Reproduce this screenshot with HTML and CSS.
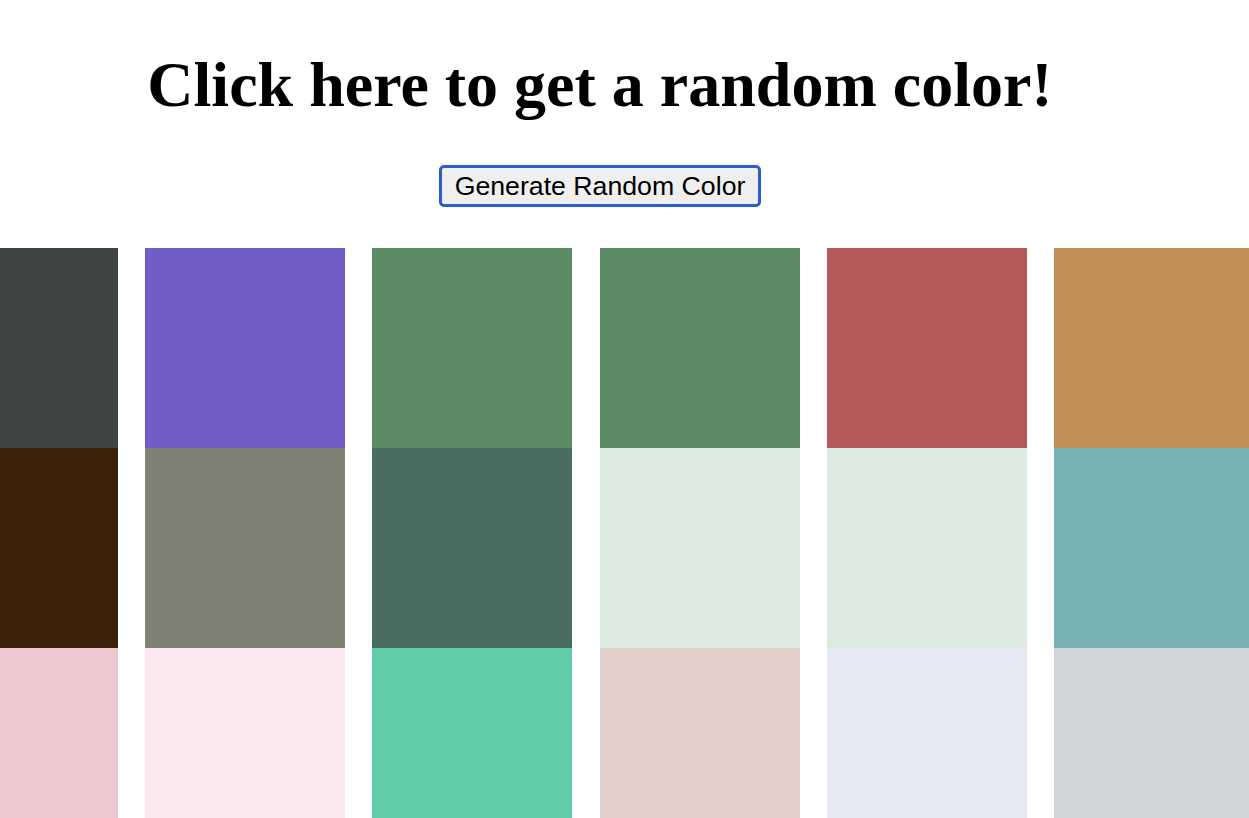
FILE: index.html
```html
<!DOCTYPE html>
<html lang="en">
<head>
<meta charset="utf-8">
<title>Random Color</title>
<link rel="stylesheet" href="styles.css">
</head>
<body>
<main class="page">
  <h1 class="title">Click here to get a random color!</h1>
  <div class="actions">
    <button class="generate" type="button">Generate Random Color</button>
  </div>
  <section class="swatches">
    <div class="swatch c1"></div>
    <div class="swatch c2"></div>
    <div class="swatch c3"></div>
    <div class="swatch c4"></div>
    <div class="swatch c5"></div>
    <div class="swatch c6"></div>
    <div class="swatch c7"></div>
    <div class="swatch c8"></div>
    <div class="swatch c9"></div>
    <div class="swatch c10"></div>
    <div class="swatch c11"></div>
    <div class="swatch c12"></div>
    <div class="swatch c13"></div>
    <div class="swatch c14"></div>
    <div class="swatch c15"></div>
    <div class="swatch c16"></div>
    <div class="swatch c17"></div>
    <div class="swatch c18"></div>
  </section>
</main>
</body>
</html>
```

FILE: styles.css
```css
html, body {
  margin: 0;
  padding: 0;
  background: #ffffff;
  overflow: hidden;
}

.page {
  width: 1200px;
}

.title {
  margin: 0;
  padding-top: 48px;
  font-family: "Liberation Serif", "Times New Roman", serif;
  font-weight: bold;
  font-size: 64px;
  line-height: 74px;
  text-align: center;
  color: #000000;
}

.actions {
  display: flex;
  justify-content: center;
  margin-top: 43px;
}

.generate {
  font-family: "Liberation Sans", Arial, sans-serif;
  font-size: 26.7px;
  line-height: 30px;
  color: #000000;
  background: #efefef;
  border: 3px solid #2a5ecb;
  border-radius: 5px;
  padding: 3px 13px;
  margin: 0;
}

.swatches {
  display: grid;
  grid-template-columns: repeat(6, 200px);
  grid-auto-rows: 200px;
  column-gap: 27.4px;
  margin-top: 41px;
  margin-left: -82.5px;
}

.c1 { background: #3f4545; }
.c2 { background: #725cc6; }
.c3 { background: #5c8b66; }
.c4 { background: #5c8b66; }
.c5 { background: #b3595a; }
.c6 { background: #c29057; }
.c7 { background: #3a2209; }
.c8 { background: #7f8172; }
.c9 { background: #4a6d5f; }
.c10 { background: #dcebdf; }
.c11 { background: #dcebdf; }
.c12 { background: #78b1b3; }
.c13 { background: #edc8d0; }
.c14 { background: #fae6ef; }
.c15 { background: #60cca8; }
.c16 { background: #e2cec8; }
.c17 { background: #e7e8f6; }
.c18 { background: #d2d5d8; }
```
